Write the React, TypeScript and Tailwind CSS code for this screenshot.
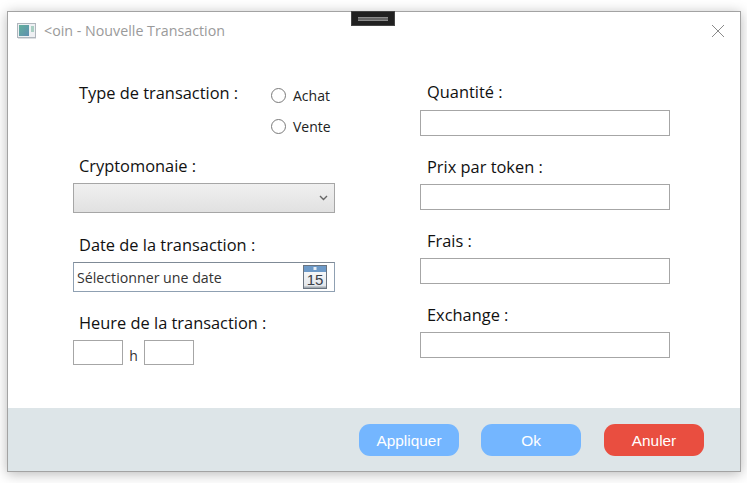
import React from "react";

function AppIcon() {
  return (
    <svg width="20" height="16" viewBox="0 0 20 16" className="shrink-0">
      <defs>
        <linearGradient id="g" x1="0" y1="0" x2="1" y2="1">
          <stop offset="0" stopColor="#62b09c" />
          <stop offset="1" stopColor="#5f8fb0" />
        </linearGradient>
      </defs>
      <rect x="0.5" y="0.5" width="18" height="14" fill="#eef0f3" stroke="#b0b6bd" />
      <rect x="2" y="2" width="10" height="11" fill="url(#g)" />
      <rect x="14" y="3" width="3" height="6" fill="#a9cfc3" />
      <rect x="1" y="15" width="18" height="1" fill="#dcdfe2" />
    </svg>
  );
}

function CalendarIcon() {
  return (
    <svg width="24" height="24" viewBox="0 0 24 24" className="shrink-0">
      <defs>
        <linearGradient id="c" x1="0" y1="0" x2="0" y2="1">
          <stop offset="0" stopColor="#ffffff" />
          <stop offset="1" stopColor="#dfe3e8" />
        </linearGradient>
      </defs>
      <rect x="0.5" y="0.5" width="23" height="23" fill="url(#c)" stroke="#6a7480" />
      <rect x="1" y="1" width="22" height="6" fill="#6d9ac8" />
      <rect x="10.5" y="2" width="3" height="3" fill="#e8eef5" />
      <rect x="1" y="21.5" width="22" height="1.5" fill="#a4abb2" />
      <text x="12" y="20" textAnchor="middle" fontSize="15" fontFamily="'Liberation Sans', sans-serif" fill="#3a4048">15</text>
    </svg>
  );
}

function Radio({ label }: { label: string }) {
  return (
    <div className="flex items-center gap-[7px] h-5">
      <span className="w-[15px] h-[15px] rounded-full border border-[#7a7a7a] bg-white" />
      <span className="text-[14px] text-[#222]">{label}</span>
    </div>
  );
}

function Field({ label, gap, top }: { label: string; gap: string; top: string }) {
  return (
    <div className={top}>
      <div className="pl-[7px] text-[16.4px] leading-[22px] text-[#111]">{label}</div>
      <div className={`${gap} w-[250px] h-[26px] border border-[#a6a6a6] bg-white`} />
    </div>
  );
}

function Btn({ label, color }: { label: string; color: string }) {
  return (
    <button
      className={`w-[100px] h-[32px] pt-px rounded-[11px] text-white text-[15.4px] ${color}`}
      style={{ fontFamily: "'Liberation Sans', sans-serif" }}
    >
      {label}
    </button>
  );
}

export default function App() {
  return (
    <div
      className="w-[747px] h-[483px] bg-white pt-[11px] pl-[7px] overflow-hidden"
      style={{ fontFamily: "'Open Sans', 'Noto Sans', sans-serif" }}
    >
      <div className="relative w-[734px] h-[461px] border border-[#a3a3a3] bg-white flex flex-col shadow-[0_2px_12px_rgba(0,0,0,0.28)]">
        <div className="absolute left-[343px] -top-px w-[44px] h-[15px] bg-[#202020] border border-[#444] flex items-center justify-center">
          <div className="w-[30px] h-[4px] bg-[#666] border-y border-[#8a8a8a]" />
        </div>

        <div className="h-[36px] flex items-center pl-[9px] pr-[15px] pt-[1px]">
          <AppIcon />
          <span className="ml-[7px] text-[14.25px] text-[#9a9a9a]">&lt;oin - Nouvelle Transaction</span>
          <svg width="14" height="14" viewBox="0 0 14 14" className="ml-auto" stroke="#8a8a8a" strokeWidth="1">
            <path d="M1 1L13 13M13 1L1 13" />
          </svg>
        </div>

        <div className="flex-1 flex pl-[65px]">
          <div className="w-[262px] pt-[33px]">
            <div className="flex">
              <div className="pl-[6px] pt-px w-[198px] text-[16.4px] leading-[22px] text-[#111]">Type de transaction :</div>
              <div className="flex flex-col gap-[11px] pt-[4px]">
                <Radio label="Achat" />
                <Radio label="Vente" />
              </div>
            </div>
            <div className="pl-[6px] mt-[19px] text-[16.4px] leading-[22px] text-[#111]">Cryptomonaie :</div>
            <div className="mt-[6px] h-[30px] border border-[#a6a6a6] bg-gradient-to-b from-[#f0f0f0] to-[#e1e1e1] flex items-center justify-end pr-[6px]">
              <svg width="9" height="6" viewBox="0 0 9 6" fill="none" stroke="#666" strokeWidth="1.4">
                <path d="M1 1L4.5 4.5L8 1" />
              </svg>
            </div>
            <div className="pl-[6px] mt-[21px] text-[16.4px] leading-[22px] text-[#111]">Date de la transaction :</div>
            <div className="mt-[6px] h-[30px] border border-[#8fa0b2] border-t-[#7f8a96] flex items-center pl-[3px] pr-[7px]">
              <span className="pt-px text-[14.2px] text-[#333]">Sélectionner une date</span>
              <span className="ml-auto"><CalendarIcon /></span>
            </div>
            <div className="pl-[6px] mt-[20px] text-[16.4px] leading-[22px] text-[#111]">Heure de la transaction :</div>
            <div className="mt-[6px] flex items-end">
              <div className="w-[50px] h-[25px] border border-[#a6a6a6]" />
              <span className="w-[21px] text-center text-[14px] leading-[18px] text-[#333]">h</span>
              <div className="w-[50px] h-[25px] border border-[#a6a6a6]" />
            </div>
          </div>

          <div className="ml-[85px] pt-[33px]">
            <Field label="Quantité :" gap="mt-[7px]" top="" />
            <Field label="Prix par token :" gap="mt-[6px]" top="mt-[20px]" />
            <Field label="Frais :" gap="mt-[6px]" top="mt-[20px]" />
            <Field label="Exchange :" gap="mt-[6px]" top="mt-[20px]" />
          </div>
        </div>

        <div className="h-[63px] bg-[#dde5e8] flex items-start justify-end pt-[16px] pr-[36px]">
          <Btn label="Appliquer" color="bg-[#74b6ff]" />
          <span className="ml-[22px]"><Btn label="Ok" color="bg-[#74b6ff]" /></span>
          <span className="ml-[23px]"><Btn label="Anuler" color="bg-[#e94e40]" /></span>
        </div>
      </div>
    </div>
  );
}
